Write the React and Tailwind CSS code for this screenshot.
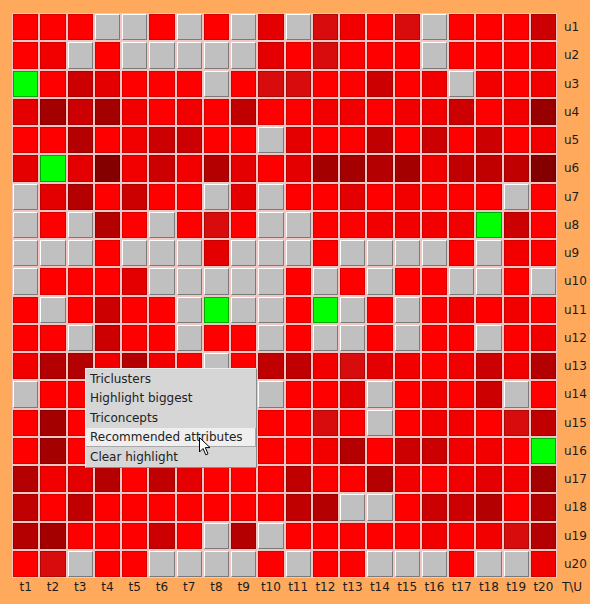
import React from "react";

const ROWS = [
  "RRRGGRGRGBGXARXGRRRC",
  "RAGRGGGGGBRXRRRGRRRA",
  "NRCBRRRGRXXRRCRAGARA",
  "BHCHARARERRAARAACRAJ",
  "RRFRACCRRGBRRERCRCRA",
  "BNBKACAFBRBHHFHAEEEK",
  "GBFRCRRGBGRRBRARRRGR",
  "GRGFRGRXRGGRRAAAANCR",
  "GGGRGGGBGGGRGGGGRGAR",
  "GRRRBGGGGGRGRGRRGGRG",
  "RGRCRRGNGGRNGRGRARAR",
  "RRGCRRGRRGRGGRGRRGRA",
  "AFFAFARGREEAXBARACAF",
  "GRRRRRRGRGRRBGRARCGR",
  "RHRRRRRRRRRXRGRAARXE",
  "RHRRRRRRRRRAFRCCAARN",
  "FABFREBRRRERRFARABAH",
  "ERERRRRRRREFGGRCCFRF",
  "FHRRRCRGFGRRRRRARAXF",
  "RXGRRGGGGRGRRGGGRGGA",
];

const CELL = {
  R: "bg-[#ff0000] border border-black/15",
  A: "bg-[#f20000] border border-black/15",
  B: "bg-[#e40000] border border-black/15",
  X: "bg-[#d80c0c] border border-black/20",
  C: "bg-[#cc0000] border border-black/15",
  E: "bg-[#c00000] border border-black/15",
  F: "bg-[#b40000] border border-black/15",
  H: "bg-[#a40000] border border-black/15",
  J: "bg-[#980000] border border-black/15",
  K: "bg-[#840000] border border-black/15",
  N: "bg-[#00ff00] border border-[#00a800]",
  G: "bg-[#c0c0c0] border border-t-white border-l-white border-r-[#7a7a7a] border-b-[#7a7a7a]",
};

const MENU = [
  "Triclusters",
  "Highlight biggest",
  "Triconcepts",
  "Recommended attributes",
  "Clear highlight",
];

export default function App() {
  return (
    <div className="relative w-[590px] h-[604px] overflow-hidden bg-[#ffa95c] font-['DejaVu_Sans',sans-serif] text-[#1c1c1c]">
      <div className="flex pt-[13px] pl-[12px]">
        <div className="grid grid-cols-[repeat(20,minmax(0,1fr))] grid-rows-[repeat(20,minmax(0,1fr))] gap-[2px] p-[1px] w-[545px] h-[565px] bg-[#efc6c2]">
          {ROWS.map((row, r) =>
            row.split("").map((c, i) => (
              <div key={r + "-" + i} className={CELL[c]} />
            ))
          )}
        </div>
        <div className="grid grid-rows-[repeat(20,minmax(0,1fr))] gap-[2px] p-[1px] h-[565px] w-[33px] pl-[7px] text-[12px]">
          {ROWS.map((_, r) => (
            <div key={r} className="flex items-center">
              u{r + 1}
            </div>
          ))}
        </div>
      </div>
      <div className="flex pl-[12px] h-[18px] text-[12px]">
        <div className="grid grid-cols-[repeat(20,minmax(0,1fr))] gap-[2px] px-[1px] w-[545px]">
          {ROWS.map((_, i) => (
            <div key={i} className="flex items-center justify-center">
              t{i + 1}
            </div>
          ))}
        </div>
        <div className="flex items-center pl-[5px]">{"T\\U"}</div>
      </div>

      <div className="absolute left-[85px] top-[368px] w-[172px] bg-[#d6d6d6] border border-t-[#ececec] border-l-[#ececec] border-r-[#8c8c8c] border-b-[#8c8c8c] text-[12px] text-[#222]">
        {MENU.map((m, i) =>
          i === 3 ? (
            <div
              key={m}
              className="h-[19.5px] flex items-center pl-[4px] bg-[#efefef] border-b border-r border-b-[#a8a8a8] border-r-[#a8a8a8]"
            >
              {m}
            </div>
          ) : (
            <div key={m} className="h-[19.5px] flex items-center pl-[4px]">
              {m}
            </div>
          )
        )}
      </div>

      <svg
        className="absolute left-[199px] top-[437px]"
        width="13"
        height="19"
        viewBox="0 0 13 19"
      >
        <path
          d="M0.5 0.5 L0.5 15 L4 11.5 L6.8 17.8 L9 16.8 L6.3 10.6 L11 10.6 Z"
          fill="#ffffff"
          stroke="#000000"
          strokeWidth="1"
          strokeLinejoin="miter"
        />
      </svg>
    </div>
  );
}
